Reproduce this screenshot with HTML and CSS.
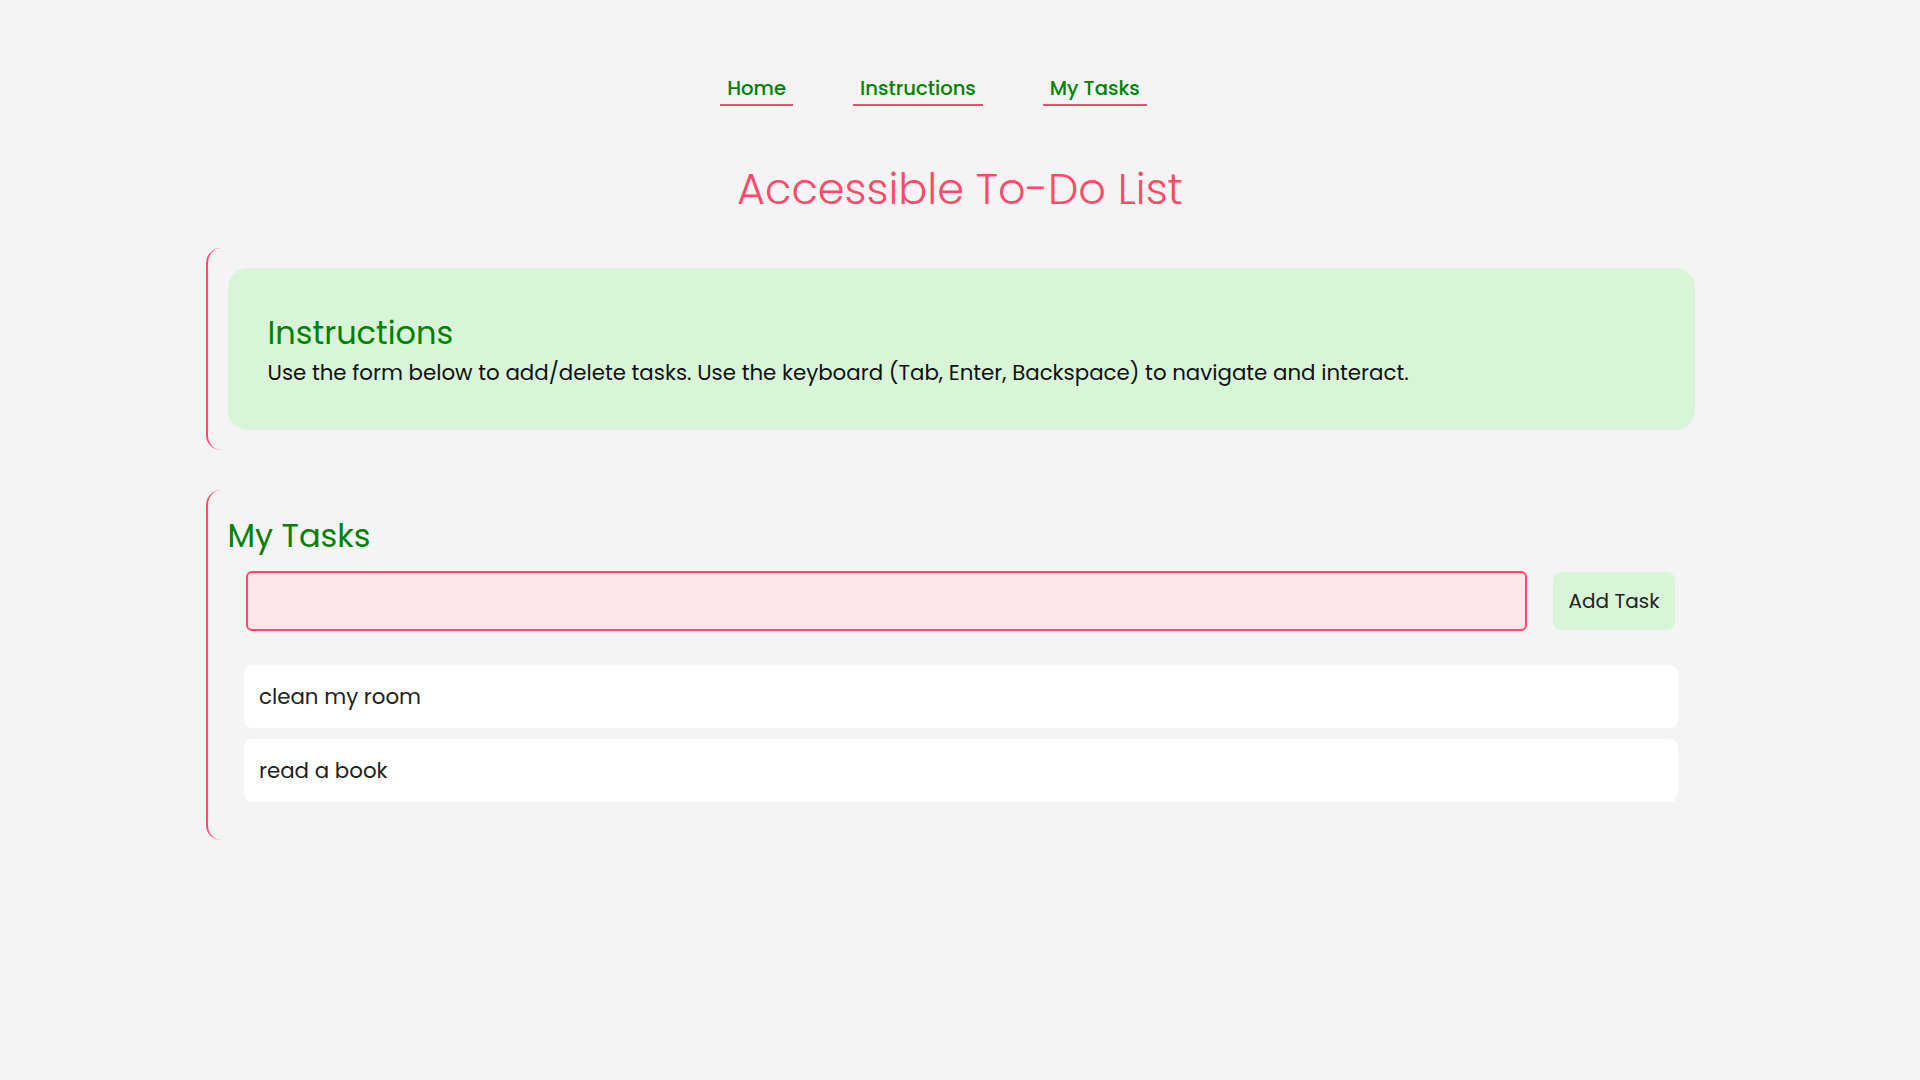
FILE: index.html
```html
<!DOCTYPE html>
<html lang="en">
<head>
<meta charset="utf-8">
<title>Accessible To-Do List</title>
<link rel="stylesheet" href="styles.css">
</head>
<body>
<nav class="nav">
  <ul class="nav-list">
    <li><a class="nav-link" href="#">Home</a></li>
    <li><a class="nav-link" href="#instructions">Instructions</a></li>
    <li><a class="nav-link" href="#tasks">My Tasks</a></li>
  </ul>
</nav>
<main>
  <h1 class="title">Accessible To-Do List</h1>
  <section class="section" id="instructions">
    <div class="info-box">
      <h2 class="section-title">Instructions</h2>
      <p class="info-text">Use the form below to add/delete tasks. Use the keyboard (Tab, Enter, Backspace) to navigate and interact.</p>
    </div>
  </section>
  <section class="section section-tasks" id="tasks">
    <h2 class="section-title">My Tasks</h2>
    <form class="task-form">
      <input class="task-input" type="text" aria-label="New task">
      <button class="add-btn" type="button">Add Task</button>
    </form>
    <ul class="task-list">
      <li class="task-item">clean my room</li>
      <li class="task-item">read a book</li>
    </ul>
  </section>
</main>
</body>
</html>
```
FILE: styles.css
```css
* { box-sizing: border-box; }
body {
  margin: 0;
  background: #f4f4f4;
  font-family: "Poppins", "Inter", "Open Sans", sans-serif;
  font-size: 21.33px;
  color: #111;
}
.nav { padding-top: 72px; }
.nav-list {
  list-style: none;
  margin: 0;
  padding: 0 53px 0 0;
  display: flex;
  justify-content: center;
  gap: 60px;
}
.nav-link {
  display: block;
  padding: 1px 7px 1px;
  line-height: 30px;
  font-size: 19.6px;
  font-weight: 500;
  color: #008000;
  text-decoration: none;
  border-bottom: 2px solid #ff4a6b;
}
.title {
  margin: 58px 0 32px;
  text-align: center;
  font-size: 43px;
  line-height: 1.2;
  font-weight: 300;
  color: #ff4a6b;
}
.section {
  width: 1509px;
  margin: 0 auto;
  padding: 20px;
  border-left: 2px solid #ff4a6b;
  border-radius: 15px;
}
.section-tasks {
  margin-top: 40px;
  padding-top: 27px;
}
.info-box {
  background: #d8f5d8;
  border-radius: 20px;
  padding: 46px 40px 41px;
}
.section-title {
  margin: 0;
  font-size: 32px;
  line-height: 1.2;
  font-weight: 400;
  color: #008000;
}
.info-box .section-title { margin-bottom: 5px; }
.info-text {
  margin: 0;
  line-height: 1.5;
  color: #111;
}
.task-form {
  display: flex;
  align-items: center;
  gap: 26px;
  margin-top: 16px;
  padding: 0 19.5px 0 18px;
}
.task-input {
  flex: 1;
  height: 60px;
  border: 2px solid #ff4a6b;
  border-radius: 6px;
  background: #fce6e9;
  outline: none;
  font: inherit;
}
.add-btn {
  width: 122px;
  height: 58px;
  border: none;
  border-radius: 8px;
  background: #d8f5d8;
  color: #222;
  font-family: inherit;
  font-size: 20px;
}
.task-list {
  list-style: none;
  margin: 34px 16.5px 18px;
  padding: 0;
  display: flex;
  flex-direction: column;
  gap: 11px;
}
.task-item {
  height: 63px;
  display: flex;
  align-items: center;
  padding: 0 15px;
  background: #fff;
  border-radius: 8px;
  line-height: 1.5;
  color: #222;
}
```
